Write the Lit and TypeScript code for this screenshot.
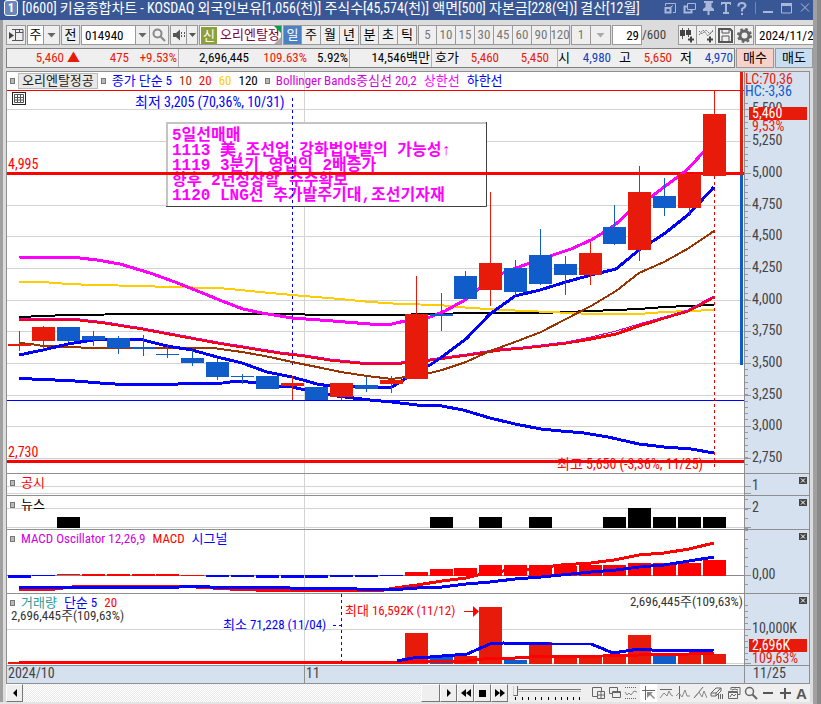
import { LitElement, html, svg, css } from "lit";
import { customElement } from "lit/decorators.js";
import { classMap } from "lit/directives/class-map.js";

/* Chart geometry. Plots start at LEFT; each pane passes its own top. */
const LEFT = 7;
const UP = "#e81a0a";
const DOWN = "#115ccb";
const barX = (i: number) => 8 + Math.floor(i * 24.83);

type Candle = [up: number, top: number, bottom: number, high: number, low: number];
const candles: Candle[] = [
  [1, 344, 346, 331, 351], [1, 327, 341, 326, 349], [0, 327, 341, 327, 342],
  [0, 336, 340, 331, 346], [0, 338, 348, 336, 354], [0, 347, 349, 335, 356],
  [0, 354, 355, 344, 358], [0, 358, 363, 350, 366], [0, 362, 377, 359, 380],
  [0, 376, 377, 374, 384], [0, 376, 389, 376, 389], [1, 383, 386, 376, 400],
  [0, 387, 400, 387, 400], [1, 383, 397, 383, 400], [0, 385, 389, 377, 392],
  [1, 380, 384, 376, 393], [1, 314, 379, 276, 379], [0, 314, 316, 293, 331],
  [0, 276, 299, 271, 301], [1, 263, 290, 192, 306], [0, 268, 292, 260, 296],
  [0, 255, 284, 229, 285], [0, 264, 275, 256, 295], [1, 253, 275, 242, 285],
  [0, 227, 244, 205, 245], [1, 192, 250, 166, 261], [0, 196, 208, 178, 216],
  [1, 174, 208, 174, 215], [1, 114, 176, 90, 176],
];

const upperBand = "19,257 80,258 97,260 120,264 150,273 175,282 200,292 222,301 243,309 262,313 292,318 320,320 345,322 370,324 392,324 405,321 430,317 445,311 465,300 480,288 490,279 505,272 530,263 553,255 571,249 591,240 601,234 616,224 628,213 651,197 664,187 679,176 688,169 698,158 714,140";
const lowerBand = "19,378 32,379 55,380 75,381 100,383 115,384 178,384 223,383 237,381 248,382 256,383 279,386 292,387 305,390 330,395 345,397 370,400 392,402 417,405 442,406 463,410 490,418 515,424 541,429 561,431 584,433 608,437 639,444 664,447 691,449 714,453";
const ma5 = "19,355 43,350 68,344 93,340 118,339 143,340 167,346 192,350 217,357 242,363 267,372 292,377 317,384 330,386 367,387 392,387 405,379 417,372 430,365 442,357 466,339 490,314 515,296 540,290 566,282 591,275 616,269 639,250 664,234 689,214 714,187";
const ma10 = "19,343 31,344 43,346 68,347 93,348 143,348 213,348 242,352 270,357 292,362 317,367 341,372 367,376 392,379 405,377 430,373 442,370 466,362 490,351 515,342 541,332 566,319 591,306 616,291 639,273 664,262 689,248 714,231";
const ma20 = "19,319 55,319 80,320 105,323 143,329 180,336 218,343 255,349 280,353 305,356 330,360 360,363 392,364 430,360 467,355 500,350 523,348 541,346 566,343 591,339 616,334 639,326 664,318 688,311 701,304 714,297";
const middleBand = "19,318 55,318 80,319 105,322 143,328 180,335 218,342 255,348 280,352 305,355 330,359 360,362 392,363 430,359 467,354 500,349 523,347 541,345 566,342 591,337 616,331 639,324 664,317 688,310 701,303 714,296";
const ma60 = "19,282 43,282 68,284 93,285 143,286 167,287 218,288 240,290 270,293 292,295 340,299 370,302 400,304 440,305 457,307 503,310 550,312 591,314 639,314 664,312 689,311 714,310";
const ma120 = "19,317 43,316 68,315 143,314 292,314 318,315 405,315 417,314 490,313 541,313 566,312 591,311 639,309 664,307 689,306 714,305";

const newsBars: [number, number][] = [[2, 11], [17, 11], [19, 11], [21, 11], [24, 11], [25, 20], [26, 11], [27, 11], [28, 11]];

/* Oscillator bars: top, bottom, rising. */
const oscillator: [number, number, number][] = [
  [575, 578, 0], [575, 576, 0], [574, 575, 1], [574, 576, 1], [574, 576, 1], [574, 576, 1], [574, 576, 1],
  [575, 576, 1], [575, 577, 0], [575, 577, 0], [575, 578, 0], [575, 578, 0], [575, 578, 0], [575, 577, 0],
  [575, 577, 0], [575, 576, 0], [572, 576, 1], [569, 576, 1], [568, 576, 1], [565, 576, 1], [565, 576, 1],
  [565, 576, 1], [566, 576, 1], [565, 576, 1], [565, 576, 1], [563, 576, 1], [563, 576, 1], [563, 576, 1], [560, 576, 1],
];
const macdLine = "19,589 32,590 55,589 80,586 179,586 230,589 255,590 305,591 378,591 395,588 417,585 442,581 466,578 478,575 503,571 530,569 561,565 591,563 614,560 639,555 664,553 689,549 714,543";
const signalLine = "19,587 179,587 190,586 205,586 210,587 270,587 290,588 350,588 357,589 403,589 417,588 442,587 466,584 490,582 515,579 541,577 571,574 591,572 616,570 639,567 664,565 689,561 714,557";

const volumes: [number, number][] = [
  ...Array.from({ length: 16 }, (): [number, number] => [662, 1]),
  [633, 1], [657, 0], [656, 1], [607, 1], [660, 0], [642, 1], [658, 1], [658, 1], [654, 1], [635, 1], [655, 0], [653, 1], [654, 1],
];
const volMa5 = "397,661 413,658 430,657 467,654 490,644 503,643 550,644 591,644 613,653 639,649 664,651 714,650";
const volMa20 = "19,662 405,662 467,661 483,659 515,658 530,657 603,656 639,655 689,654 714,653";

const priceGrid: [number, string][] = [
  [109, "5,500"], [141, "5,250"], [173, "5,000"], [205, "4,750"], [236, "4,500"], [268, "4,250"],
  [300, "4,000"], [331, "3,750"], [363, "3,500"], [395, "3,250"], [426, "3,000"], [458, "2,750"],
];

const poly = (points: string, color: string, w: number) =>
  svg`<polyline points=${points} fill="none" stroke=${color} stroke-width=${w} shape-rendering="crispEdges"></polyline>`;
const box = (x: number, y: number, w: number, h: number, fill: string) =>
  svg`<rect x=${x} y=${y} width=${w} height=${h} fill=${fill}></rect>`;
const row = (y: number, color = "#d3d3d3", h = 1) =>
  svg`<rect x="0" y=${y} width="100%" height=${h} fill=${color}></rect>`;
const label = (x: number, y: number, text: string, color: string, cls = "t13") =>
  svg`<text x=${x} y=${y} fill=${color} class=${cls}>${text}</text>`;

const icon = (w: number, h: number, body: unknown) =>
  html`<svg class="icon" width=${w} height=${h} viewBox="0 0 ${w} ${h}" aria-hidden="true">${body}</svg>`;
const path = (d: string, color = "#555", w = 1) =>
  svg`<path d=${d} fill="none" stroke=${color} stroke-width=${w}></path>`;
const solid = (d: string, color = "#444") => svg`<path d=${d} fill=${color}></path>`;
const caret = (color = "#666") => icon(9, 5, solid("M0.5 0h8L4.5 4.5z", color));

const TI = "#a9b8d9";
const titleIcons: [string, unknown][] = [
  ["배치", icon(13, 12, svg`${path("M1.500 4V1.500h10v9H9", TI)}${path("M1.500 6h5v4.500h-5zM9 3.500v0", TI, 2)}${path("M6 5.500l3-2", TI)}`)],
  ["분리", icon(13, 12, svg`${path("M4.500 1.500h8v6h-8z", TI)}${path("M4 4.500H1.500v6h7V8", TI, 2)}`)],
  ["고정", icon(13, 14, solid("M2 0h9v2H9.500v4L12 8v2H7.500v4h-2v-4H1V8l2.500-2V2H2z", TI))],
  ["글꼴", icon(10, 12, solid("M0 0h10v3H9V2H6v8h2v2H2v-2h2V2H1v1H0z", TI))],
  ["도움말", icon(10, 13, svg`${path("M1.500 4.500V3Q2 1 5 1T8.500 3.500Q8.500 5 5 7V9.500", TI, 2)}${box(4, 11, 2, 2, TI)}`)],
];
const windowIcons: [string, unknown][] = [
  ["최소화", icon(10, 12, box(0, 9, 10, 2, TI))],
  ["최대화", icon(11, 12, svg`${path("M0.500 2v9h10V2", TI)}${box(0, 1, 11, 3, TI)}`)],
  ["닫기", icon(10, 12, path("M1 1.500l8 8M9 1.500l-8 8", TI, 1))],
];

const chartTools: [string, unknown][] = [
  ["봉 추가", icon(17, 17, svg`${path("M3.500 1v11M9.500 1v9", "#555")}${box(1, 3, 5, 6, "#444")}${box(7, 3, 5, 5, "#444")}${path("M9 12.500h6M12 9.500v6", "#444", 2)}`)],
  ["지표 추가", icon(17, 17, svg`<path d="M1 8l4-5 5 6 5-6M1 4l3 3 4-4 4 4 3-3" fill="none" stroke="#777" stroke-dasharray="2 1"></path>${path("M9 12.500h6M12 9.500v6", "#444", 2)}`)],
  ["저장", icon(17, 17, svg`${path("M2 2h11l2 2v11H2z", "#555", 2)}${path("M5 2v4h7V2M5 15v-6h7v6", "#555", 1)}`)],
  ["설정", icon(17, 17, svg`<circle cx="8.500" cy="8.500" r="4.500" fill="none" stroke="#666" stroke-width="3"></circle><circle cx="8.500" cy="8.500" r="6.500" fill="none" stroke="#666" stroke-width="2" stroke-dasharray="2.600 2.500"></circle>`)],
];

const G = "#666";
const drawTools: [string, unknown][] = [
  ["화면 추가", icon(14, 14, svg`${path("M6 10.500H1.500V1.500h9V5", G)}${path("M6.500 5.500h7v7h-7zM10 5.500v7M6.500 9h7", G)}`)],
  ["화면 분할", icon(14, 14, svg`${path("M4 7.500H1.500V1.500h8V5", G)}${path("M4.500 5.500h8v6h-8zM4.500 6.500h8", G)}`)],
  ["차트 비교", icon(15, 14, svg`<path d="M1 1.500h12M1 12.500h12" stroke=${G} stroke-dasharray="1 1"></path>${path("M1 6l2 3 2-2 2 2 3-4 3 1", "#888")}`)],
  ["추세선", icon(14, 14, svg`${path("M0 4.500h13M3.500 0v14", G)}${solid("M5 6h6l-2 2 4 4-1 1-4-4L5 12z", "#888")}`)],
  ["수평선", icon(14, 14, svg`${path("M1 3.500h12", G)}${path("M1 12l4-5 3 3 2-5 2 4 2 1", "#888")}`)],
  ["수직선", icon(14, 14, svg`${path("M3.500 0v13", G)}${path("M0 10l3-3 3 4 3-7 2 6h3", "#888")}`)],
  ["대각선", icon(14, 14, svg`${path("M1 12L10 1", G)}${path("M2 11l4-5 3 5 2-6 3 7", "#888")}`)],
  ["지우개", icon(14, 14, svg`${path("M1 7l5-5h5v3l-5 5H1zM1 7h5v3M6 7l5-5", G)}${path("M8.500 8v5M10.500 8v5M12.500 8v5", G)}`)],
  ["차트 겹침", icon(14, 14, svg`${path("M4 4V1.500h9v7H11", G)}${path("M1.500 5.500h9v7h-9zM1.500 6.500h9", G)}${path("M3 11l2-3 2 2 2-2M5 4l3-1 3 1", G)}`)],
  ["돋보기", icon(14, 14, svg`<circle cx="5.500" cy="5.500" r="4" fill="none" stroke=${G} stroke-width="1.500"></circle>${path("M8.500 8.500l4.500 4.500", G, 2)}`)],
  ["축소", icon(14, 14, box(2, 6, 10, 2, "#555"))],
  ["확대", icon(14, 14, svg`${box(2, 6, 11, 2, "#555")}${box(6, 2, 2, 11, "#555")}`)],
];

@customElement("app-root")
export class AppRoot extends LitElement {
  static styles = css`
    :host {
      display: block;
      font-family: "Roboto Condensed", "Noto Sans CJK KR", sans-serif;
      font-size: 13px;
      line-height: 16px;
      color: #000;
      overflow: hidden;
    }
    * { box-sizing: border-box; }
    button, input { font: inherit; color: inherit; margin: 0; padding: 0; border: 0; background: none; border-radius: 0; }
    button { display: flex; align-items: center; justify-content: center; flex: none; white-space: nowrap; }
    .icon { display: block; flex: none; }
    .frame { display: grid; grid-template-columns: minmax(0, 1fr) 4px 4px; background: #a0a0a0; }
    .edge { background: #8a8a8a; grid-column: 3; }
    .window { background: #dcdcdc; border-bottom: 3px solid #e4e4e4; overflow: hidden; }
    .title { display: flex; align-items: center; height: 20px; background: #3a5795; color: #fff; padding: 0 3px 4px 4px; }
    .badge { width: 14px; height: 16px; border: 1px solid #fff; border-radius: 3px; font-weight: bold; text-align: center; line-height: 14px; background: #6b85bd; margin-right: 4px; }
    .name { flex: 1; min-width: 0; overflow: hidden; white-space: nowrap; margin: 0; font-size: 14px; font-weight: normal; }
    .tools { display: flex; gap: 6px; }
    .wtools { display: flex; gap: 8px; margin-left: 8px; padding-left: 7px; border-left: 1px solid #6f86b6; }
    .body { border-left: 3px solid #a0a0a0; padding-left: 3px; }
    .bar { display: flex; padding: 5px 0 3px; height: 28px; overflow: hidden; }
    .cell { height: 20px; border: 1px solid #999; background: #efefef; }
    .group { display: flex; flex: none; margin-right: 1px; }
    .group > * + * { border-left: 0; }
    .white { background: #fff; }
    .w20 { width: 20px; } .w19 { width: 19px; } .w17 { width: 17px; } .w16 { width: 16px; } .w14 { width: 14px; } .w11 { width: 11px; }
    .code { width: 55px; padding-left: 3px; }
    .stock { width: 83px; display: flex; align-items: center; background: #fff; color: #800040; overflow: hidden; padding-left: 1px; position: relative; white-space: nowrap; gap: 3px; }
    .mark { width: 16px; height: 17px; line-height: 17px; background: #8fa03a; color: #fff; text-align: center; flex: none; }
    .corner { position: absolute; right: 0; top: 0; }
    .on { background: #4a80c4; color: #fff; }
    .dim { color: #777; }
    .count { width: 30px; text-align: right; padding-right: 2px; background: #fff; }
    .total { width: 36px; line-height: 20px; color: #444; flex: none; }
    .date { width: 80px; background: #fff; padding-left: 3px; flex: none; }
    .quote { display: flex; height: 20px; margin-bottom: 3px; }
    .strip { display: flex; flex: 1; min-width: 0; background: #efefef; border: 1px solid #808080; line-height: 18px; margin-right: 1px; overflow: hidden; }
    .q { flex: none; text-align: right; white-space: nowrap; }
    .sep { border-right: 1px solid #b0b0b0; padding-right: 1px; }
    .red { color: #e81a0a; } .blue { color: #1242c0; }
    .q1 { width: 73px; } .q2 { width: 49px; } .q3 { width: 50px; } .q4 { width: 70px; } .q5 { width: 58px; } .q6 { width: 43px; }
    .q7 { width: 82px; } .q8 { width: 27px; } .q9 { width: 40px; } .q11 { width: 59px; } .q12 { width: 12px; } .q13 { width: 41px; } .q14 { width: 20px; }
    .pad8 { padding-right: 8px; }
    .buy { width: 38px; background: #f6d2ca; border: 1px solid #999; margin-right: 1px; }
    .sell { width: 38px; background: #c6ddf2; border: 1px solid #999; }
    .charts { border: 1px solid #8f8f8f; border-bottom: 0; margin-right: 3px; }
    .pane { display: grid; grid-template-columns: minmax(0, 1fr) 65px; border-bottom: 1px solid #8f8f8f; }
    .plot { grid-area: 1 / 1; display: block; width: 100%; background: #fff; }
    .axis { grid-area: 1 / 2; display: block; width: 65px; background: #d6e1ef; border-left: 1px solid #8f8f8f; }
    .legend { grid-area: 1 / 1; z-index: 1; align-self: start; justify-self: start; display: flex; align-items: center; height: 17px; padding-left: 3px; white-space: nowrap; }
    .legend i { width: 5px; height: 6px; background: #b8b8b8; border: 1px solid #777; margin-right: 6px; flex: none; }
    .legend span { margin-right: 7px; }
    .legend .tag { background: #e8e8e8; border: 1px solid #bbb; color: #222; padding: 0 3px; line-height: 14px; margin: 0 3px 0 -3px; }
    .legend .c5 { color: #00f; } .legend .c10 { color: #930; } .legend .c20 { color: #f00; } .legend .c60 { color: #fc0; }
    .legend .mid { color: #d400e0; } .legend .up { color: #f0f; } .legend .vol { color: #2a9a9a; }
    .pane .close { grid-area: 1 / 2; z-index: 1; justify-self: end; width: 8px; height: 7px; margin: 3px 2px 0 0; background: #444; }
    .t13 { font-size: 13px; } .t14 { font-size: 14px; }
    .note { font-family: "Liberation Mono", "Noto Sans CJK KR", monospace; font-size: 16px; font-weight: bold; white-space: pre; }
    .plot.dates { background: #d6e1ef; }
    .foot { display: flex; height: 18px; background: #efefef; margin-right: 3px; }
    .push { width: 17px; background: #efefef; border: 1px solid #fff; border-right-color: #777; border-bottom-color: #777; }
    .track { flex: 1; background: repeating-conic-gradient(#fff 0 25%, #e9e9e9 0 50%) 0 0 / 2px 2px; }
    .thumb { width: 19px; background: #efefef; border: 1px solid #fff; border-right-color: #777; border-bottom-color: #777; }
    .slider { width: 78px; padding: 1px 5px 0; flex: none; display: grid; }
    .slider input { grid-area: 1 / 1; width: 68px; height: 10px; appearance: none; outline: none; }
    .slider input::-webkit-slider-runnable-track { height: 3px; background: #eee; border-top: 1px solid #777; border-bottom: 1px solid #bbb; }
    .slider input::-webkit-slider-thumb { appearance: none; width: 5px; height: 10px; margin-top: -4px; background: #efefef; border-right: 1px solid #666; border-bottom: 1px solid #666; border-left: 1px solid #ccc; }
    .ticks { grid-area: 2 / 1; display: block; }
    .draw { display: flex; padding-left: 3px; }
    .draw button { width: 17px; }
    .draw .picked { background: #fff; }
    .draw .font { font: bold 15px "Liberation Sans", sans-serif; color: #555; }
  `;

  private head() {
    return html`<header class="title">
      <span class="badge">1</span>
      <h1 class="name">[0600] 키움종합차트 - KOSDAQ 외국인보유[1,056(천)] 주식수[45,574(천)] 액면[500] 자본금[228(억)] 결산[12월]</h1>
      <div class="tools">${titleIcons.map(([n, i]) => html`<button aria-label=${n}>${i}</button>`)}</div>
      <div class="wtools">${windowIcons.map(([n, i]) => html`<button aria-label=${n}>${i}</button>`)}</div>
    </header>`;
  }

  private buttons(items: string[], dim = false, active = "") {
    return html`<div class="group">${items.map(
      (t) => html`<button class=${classMap({ cell: true, w19: true, on: t === active, dim })}>${t}</button>`)}</div>`;
  }

  private toolbar() {
    return html`<div class="bar">
      <div class="group"><button class="cell w20" aria-label="메뉴">${icon(15, 14, svg`${path("M3 1.500h11v11H3M6.500 1.500v11M10.500 1.500v3M6 4.500h8", "#555")}${solid("M0 4l5 3.500L0 11z")}`)}</button></div>
      <div class="group"><button class="cell white w17">주</button><button class="cell w16" aria-label="주기 선택">${caret()}</button></div>
      <div class="group"><button class="cell w19">전</button></div>
      <div class="group"><input class="cell white code" aria-label="종목코드" value="014940" /><button class="cell w14" aria-label="종목 목록">${caret()}</button><button class="cell w19" aria-label="검색">${icon(14, 14, svg`<circle cx="5.500" cy="5.500" r="4" fill="none" stroke="#888" stroke-width="2"></circle>${path("M8.500 8.500l4.500 4.500", "#888", 2)}`)}</button></div>
      <div class="group"><button class="cell w17" aria-label="소리">${icon(14, 12, svg`${solid("M1 4h3l4-3.500v11L4 8H1z", "#555")}<path d="M9.500 3v6M12.500 3v6" stroke="#555" stroke-dasharray="2 1"></path>`)}</button><button class="cell w11" aria-label="소리 설정">${icon(7, 4, solid("M0 0h7L3.500 4z", "#555"))}</button></div>
      <div class="group"><div class="cell stock"><span class="mark">신</span><span>오리엔탈정</span><svg class="corner" width="9" height="18" aria-hidden="true"><path d="M2 0h7v7z" fill="#0a9a50"></path><path d="M9 11v7H2z" fill="#aaa"></path></svg></div></div>
      ${this.buttons(["일", "주", "월", "년"], false, "일")}
      ${this.buttons(["분", "초", "틱"])}
      ${this.buttons(["5", "10", "15", "30", "45", "60", "90", "120"], true)}
      <div class="group"><button class="cell dim w20">1</button><button class="cell w20" aria-label="간격 선택">${caret("#aaa")}</button></div>
      <input class="cell count" aria-label="봉 개수" value="29" /><span class="total">/600</span>
      <div class="group">${chartTools.map(([n, i]) => html`<button class="cell w19" aria-label=${n}>${i}</button>`)}</div>
      <input class="cell date" aria-label="날짜" value="2024/11/25" />
    </div>`;
  }

  private quote() {
    return html`<div class="quote">
      <div class="strip">
        <span class="q q1 red">5,460 ▲</span><span class="q q2 red">475</span><span class="q q3 red sep">+9.53%</span>
        <span class="q q4">2,696,445</span><span class="q q5 red">109.63%</span><span class="q q6 sep">5.92%</span>
        <span class="q q7 sep">14,546백만</span>
        <span class="q q8">호가</span><span class="q q9 red">5,460</span><span class="q q11 red sep pad8">5,450</span>
        <span class="q q12">시</span><span class="q q13 blue">4,980</span>
        <span class="q q14">고</span><span class="q q13 red">5,650</span>
        <span class="q q14">저</span><span class="q q13 blue">4,970</span>
      </div>
      <button class="buy">매수</button><button class="sell">매도</button>
    </div>`;
  }

  private close(name: string) {
    return html`<button class="close" aria-label="${name} 닫기">${icon(6, 5, path("M1 0.500l4 4M5 0.500l-4 4", "#fff"))}</button>`;
  }

  private ticks(from: number, to: number, step: number) {
    const out = [];
    for (let y = from; y <= to; y += step) out.push(box(0, Math.round(y), 3, 1, "#999"));
    return out;
  }

  private pricePane() {
    const top = 72;
    const notes = ["5일선매매", "1113 美,조선업 강화법안발의 가능성↑", "1119 3분기 영업익 2배증가", "향후 2년성상할 수수확보", "1120 LNG선 추가발주기대,조선기자재"];
    return html`<section class="pane" aria-label="가격 차트">
      <svg class="plot" height="401">
        <g transform="translate(0,${-top})">${priceGrid.map(([y]) => row(y))}</g>
        <g transform="translate(${-LEFT},${-top})">
          ${box(304, 72, 1, 401, "#d3d3d3")}
          ${box(166, 122, 320, 84, "#fff")}
          ${path("M167 206V123H486", "#c4c4c4", 2)}
          ${path("M166 206.500H486.500V122", "#404040")}
          ${notes.map((n, i) => label(172, 140 + i * 15, n, "#ff00ff", "note"))}
          ${label(557, 469, "최고 5,650 (-3,36%, 11/25)", "#f00", "t14")}
        </g>
        <g transform="translate(0,${-top})">${row(90, "#f00")}${row(400, "#00f")}${row(172, "#f00", 3)}${row(460, "#f00", 3)}</g>
        <g transform="translate(${-LEFT},${-top})">
          <path d="M292.500 98V366" stroke="#00f" stroke-dasharray="3 3"></path>
          <path d="M714.500 176V467" stroke="#e00" stroke-dasharray="3 3"></path>
          ${poly(ma120, "#000", 2)}${poly(ma60, "#fc0", 2)}${poly(ma20, "#f00", 3)}${poly(middleBand, "#d400c8", 1)}
          ${poly(ma10, "#993300", 2)}${poly(upperBand, "#f0f", 3)}${poly(lowerBand, "#00f", 3)}${poly(ma5, "#00f", 3)}
          ${candles.map(([up, t, b, h, l], i) => {
            const c = up ? UP : DOWN;
            return svg`${box(barX(i) + 11, h, 1, l - h, c)}${box(barX(i), t, 23, b - t, c)}`;
          })}
          ${label(135, 107, "최저 3,205 (70,36%, 10/31)", "#00f", "t14")}
          ${label(8, 169, "4,995", "#f00", "t14")}
          ${label(8, 457, "2,730", "#f00", "t14")}
          <rect x="12.500" y="92.500" width="13" height="12" fill="#fff" stroke="#222"></rect>
          ${path("M14.500 94.500h9v8h-9zM17.500 94.500v8M20.500 94.500v8M14.500 97.500h9M14.500 100h9", "#555")}
        </g>
        <svg x="100%" overflow="visible">${box(-4, 0, 3, 103, UP)}${box(-4, 103, 3, 190, DOWN)}</svg>
      </svg>
      <div class="legend">
        <i></i><span class="tag">오리엔탈정공</span><i></i>
        <span class="c5">종가 단순 5</span><span class="c10">10</span><span class="c20">20</span><span class="c60">60</span><span>120</span>
        <i></i><span class="mid">Bollinger Bands중심선 20,2</span><span class="up">상한선</span><span class="c5">하한선</span>
      </div>
      <svg class="axis" height="401">
        <g transform="translate(0,${-top})">
          ${this.ticks(103, 470, 6.33)}
          ${priceGrid.map(([y, t]) => svg`${box(0, y, 6, 1, "#999")}${label(7, y + 4, t, "#444", "t14")}`)}
          ${label(0, 84, "LC:70,36", UP, "t14")}${label(0, 96, "HC:-3,36", DOWN, "t14")}
          ${box(4, 107, 58, 13, UP)}${label(7, 118, "5,460", "#fff", "t14")}${label(7, 131, "9,53%", UP, "t14")}
        </g>
      </svg>
    </section>`;
  }

  private smallPanes() {
    return html`
      <section class="pane" aria-label="공시">
        <svg class="plot" height="21">${row(12)}${row(19)}${box(297, 0, 1, 21, "#d3d3d3")}</svg>
        <div class="legend"><i></i><span class="c20">공시</span></div>
        <svg class="axis" height="21">${box(0, 12, 6, 1, "#999")}${box(0, 19, 6, 1, "#999")}${label(7, 16, "1", "#444", "t14")}</svg>
        ${this.close("공시")}
      </section>
      <section class="pane" aria-label="뉴스">
        <svg class="plot" height="33">${row(12)}${row(31)}${box(297, 0, 1, 33, "#d3d3d3")}
          ${newsBars.map(([i, h]) => box(barX(i) - LEFT, 32 - h, 23, h, "#000"))}</svg>
        <div class="legend"><i></i><span>뉴스</span></div>
        <svg class="axis" height="33">${this.ticks(3, 32, 9.5)}${box(0, 12, 6, 1, "#999")}${box(0, 31, 6, 1, "#999")}${label(7, 16, "2", "#444", "t14")}</svg>
        ${this.close("뉴스")}
      </section>`;
  }

  private macdPane() {
    return html`<section class="pane" aria-label="MACD">
      <svg class="plot" height="63">
        ${box(297, 0, 1, 63, "#d3d3d3")}${row(45, "#888")}
        <g transform="translate(${-LEFT},-530)">
          ${oscillator.map(([t, b, up], i) => box(barX(i), t, 23, b - t, up ? "#f00" : "#00f"))}
          ${poly(macdLine, "#f00", 3)}${poly(signalLine, "#00f", 3)}
        </g>
      </svg>
      <div class="legend"><i></i><span class="mid">MACD Oscillator 12,26,9</span><span class="c20">MACD</span><span class="c5">시그널</span></div>
      <svg class="axis" height="63">${this.ticks(0, 62, 9)}${box(0, 45, 6, 1, "#999")}${label(7, 49, "0,00", "#444", "t14")}</svg>
      ${this.close("MACD")}
    </section>`;
  }

  private volumePane() {
    return html`<section class="pane" aria-label="거래량">
      <svg class="plot" height="71">
        ${box(297, 0, 1, 71, "#d3d3d3")}${row(35)}${row(69)}
        <g transform="translate(${-LEFT},-594)">
          ${volumes.map(([t, up], i) => box(barX(i), t, 23, 664 - t, up ? UP : DOWN))}
          <path d="M341.500 594V662M333 625.500h8" stroke="#00f" stroke-dasharray="3 3"></path>
          ${poly(volMa20, "#f00", 3)}${poly(volMa5, "#00f", 3)}
          ${label(11, 620, "2,696,445주(109,63%)", "#333")}
          ${label(223, 629, "최소 71,228 (11/04)", "#00f")}
          ${label(345, 615, "최대 16,592K (11/12)", "#f00")}
          ${path("M464 611.500h10", "#f00")}${solid("M473 606v11l6-5.500z", "#f00")}
        </g>
        <svg x="100%" overflow="visible"><text x="-1" y="12" text-anchor="end" class="t13" fill="#333">2,696,445주(109,63%)</text></svg>
      </svg>
      <div class="legend"><i></i><span class="vol">거래량</span><span class="c5">단순 5</span><span class="c20">20</span></div>
      <svg class="axis" height="71">${this.ticks(11, 70, 6)}${box(0, 35, 6, 1, "#999")}${box(0, 69, 6, 1, "#999")}
        ${label(7, 39, "10,000K", "#444", "t14")}${label(7, 69, "109,63%", UP, "t14")}${box(4, 45, 58, 13, UP)}${label(7, 56, "2,696K", "#fff", "t14")}</svg>
      ${this.close("거래량")}
    </section>
    <div class="pane">
      <svg class="plot dates" height="17">${box(297, 0, 1, 17, "#8f8f8f")}${label(1, 12, "2024/10", "#444", "t14")}${label(299, 12, "11", "#444", "t14")}</svg>
      <svg class="axis" height="17">${label(8, 12, "11/25", "#444", "t14")}</svg>
    </div>`;
  }

  private footer() {
    return html`<footer class="foot">
      <button class="push" aria-label="왼쪽으로">${icon(6, 8, solid("M5 0v8L1 4z", "#000"))}</button>
      <div class="track"></div>
      <div class="thumb"></div>
      <button class="push" aria-label="재생">${icon(6, 8, solid("M1 0v8l4-4z", "#000"))}</button>
      <button class="push" aria-label="뒤로">${icon(10, 8, solid("M5 0v8L0 4zM10 0v8L5 4z", "#000"))}</button>
      <button class="push" aria-label="정지">${icon(7, 7, box(0, 0, 7, 7, "#000"))}</button>
      <button class="push" aria-label="앞으로">${icon(10, 8, solid("M0 0v8l5-4zM5 0v8l5-4z", "#000"))}</button>
      <div class="slider"><input type="range" aria-label="속도" min="0" max="10" value="0" />
        <svg class="ticks" width="68" height="4" aria-hidden="true">${[2, 9, 15, 22, 28, 35, 42, 48, 54, 60, 66].map((x) => box(x, 0, 1, 3, "#000"))}</svg></div>
      <div class="draw">${drawTools.map(([n, i]) => html`<button class=${classMap({ picked: n === "추세선" })} aria-label=${n}>${i}</button>`)}<button class="font">A</button></div>
    </footer>`;
  }

  render() {
    return html`<main class="frame">
      <div class="window">
        ${this.head()}
        <div class="body">
          ${this.toolbar()}${this.quote()}
          <div class="charts">${this.pricePane()}${this.smallPanes()}${this.macdPane()}${this.volumePane()}</div>
          ${this.footer()}
        </div>
      </div>
      <div class="edge"></div>
    </main>`;
  }
}
